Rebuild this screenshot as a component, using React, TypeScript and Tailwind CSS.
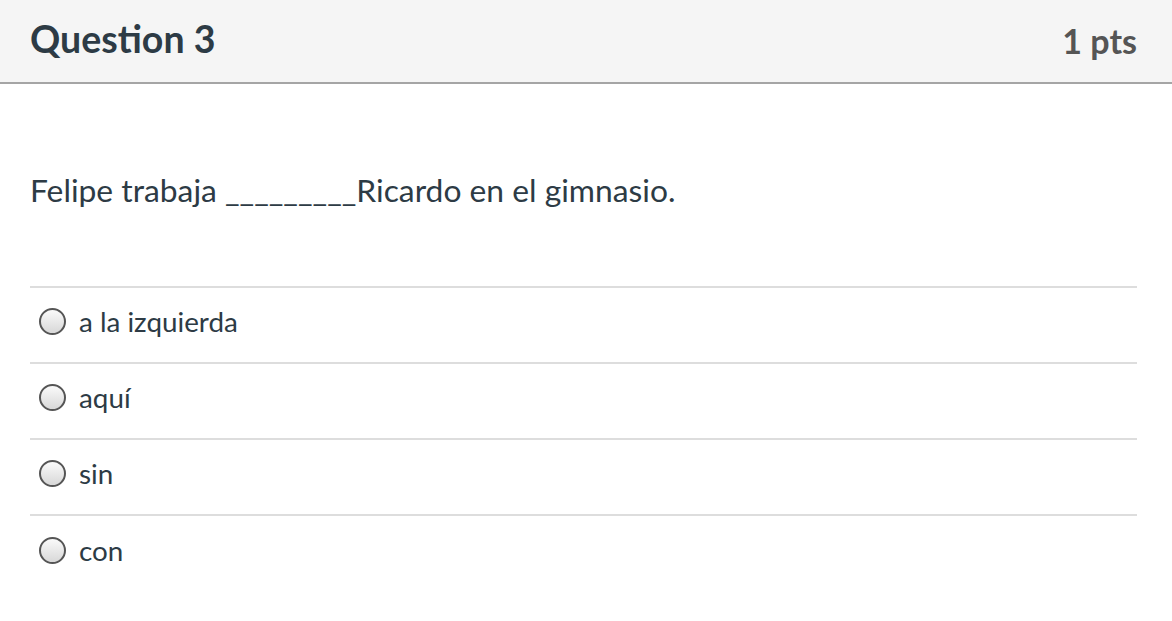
import React from "react";

const options = ["a la izquierda", "aquí", "sin", "con"];

const Radio = () => (
  <span className="inline-block w-[27px] h-[27px] rounded-full border-2 border-[#555] bg-gradient-to-b from-[#fafafa] to-[#d8d8d8] shrink-0" />
);

export default function App() {
  return (
    <div className="w-[1172px] h-[621px] bg-white font-['Lato',sans-serif] text-[#2d3b45] overflow-hidden">
      <div className="h-[84px] bg-[#f5f5f5] border-b-2 border-[#a5a5a5] flex items-center justify-between pl-[30px] pr-[35px]">
        <h2 className="text-[37.5px] font-bold leading-none pb-[5px]">Question 3</h2>
        <span className="text-[34px] font-bold text-[#555] leading-none pb-[1px]">1 pts</span>
      </div>
      <div className="px-[30px] pr-[35px]">
        <p className="text-[31.8px] mt-[91px] leading-none">Felipe trabaja _________Ricardo en el gimnasio.</p>
        <div className="mt-[79px] border-t-2 border-[#ddd]">
          {options.map((o, i) => (
            <div
              key={o}
              className={`h-[76px] flex items-center gap-[13px] pl-[9px] pb-[6px] ${i < options.length - 1 ? "border-b-2 border-[#ddd]" : ""}`}
            >
              <Radio />
              <span className="text-[27.8px]">{o}</span>
            </div>
          ))}
        </div>
      </div>
    </div>
  );
}
